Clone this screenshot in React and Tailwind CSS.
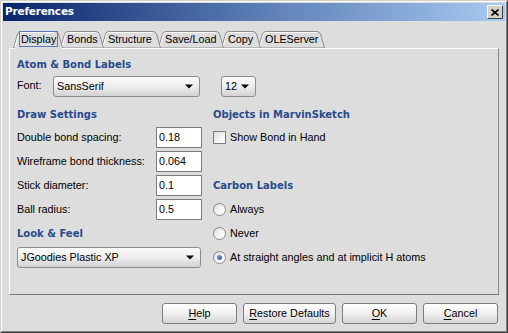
import React from 'react';

const tabs = [
  { label: 'Display', w: 'w-[50px]', z: 'z-[7]', selected: true },
  { label: 'Bonds', w: 'w-[44px]', z: 'z-[5]' },
  { label: 'Structure', w: 'w-[60px]', z: 'z-[4]' },
  { label: 'Save/Load', w: 'w-[66px]', z: 'z-[3]' },
  { label: 'Copy', w: 'w-[40px]', z: 'z-[2]' },
  { label: 'OLEServer', w: 'w-[67px]', z: 'z-[1]' },
];

function TabShape({ width }) {
  const w = width;
  return (
    <svg className="absolute inset-0" width={w} height="18" viewBox={`0 0 ${w} 18`}>
      <path d={`M0.5 18 L4.5 4 Q5.5 1.5 8 1.5 L${w - 8} 1.5 Q${w - 5.5} 1.5 ${w - 4.5} 4 L${w - 0.5} 18 Z`} fill="#dddddd" stroke="#8e8e8e" />
      <path d={`M2 17 L5.5 4.5 Q6.5 2.5 8.5 2.5 L${w - 8.5} 2.5`} fill="none" stroke="#ffffff" />
    </svg>
  );
}

function Tab({ tab }) {
  const px = parseInt(tab.w.match(/\d+/)[0], 10);
  return (
    <div className={`relative ${tab.w} ${tab.z} h-[18px] -ml-[3px] first:ml-0 flex items-center pl-[6px]`}>
      <TabShape width={px} />
      {tab.selected ? (
        <>
          <span className="relative border border-[#5b78b0] h-[16px] leading-[14px] px-[1px] -mt-[1px]">{tab.label}</span>
          <div className="absolute left-[2px] right-[1px] -bottom-[1px] h-[2px] bg-[#dddddd]" />
        </>
      ) : (
        <span className="relative pl-[1px] pt-[1px]">{tab.label}</span>
      )}
    </div>
  );
}

function Combo({ value, w }) {
  return (
    <div className={`flex items-center justify-between h-[21px] rounded-[3px] border border-[#8c8c8c] bg-gradient-to-b from-[#fafafa] via-[#eeeeee] to-[#d2d2d2] pl-[3px] pr-[6px] ${w}`}>
      <span>{value}</span>
      <svg width="8" height="5" viewBox="0 0 8 5">
        <path d="M0 0.5h8L4 4.5z" fill="#000" />
      </svg>
    </div>
  );
}

function Heading({ children }) {
  return (
    <div className="h-[16px] flex items-center font-['DejaVu_Sans',sans-serif] font-bold text-[10px] text-[#284a8c]">
      {children}
    </div>
  );
}

function Field({ label, value }) {
  return (
    <div className="h-[21px] flex items-center justify-between">
      <span>{label}</span>
      <div className="w-[46px] h-[21px] border border-[#7c7c7c] bg-white flex items-center pl-[2px]">{value}</div>
    </div>
  );
}

function Radio({ label, checked }) {
  return (
    <div className="h-[21px] flex items-center gap-[4px]">
      <div className="w-[13px] h-[13px] rounded-full border border-[#8a8a8a] bg-gradient-to-br from-[#d8d8d8] via-[#f4f4f4] to-white flex items-center justify-center">
        {checked && <div className="w-[5px] h-[5px] rounded-full bg-gradient-to-br from-[#8aa6dc] to-[#2b4f9c]" />}
      </div>
      <span>{label}</span>
    </div>
  );
}

function Button({ w, pre, u, post }) {
  return (
    <div className={`h-[21px] ${w} rounded-[3px] border border-[#7e7e7e] bg-gradient-to-b from-white via-[#f0f0f0] to-[#d4d4d4] flex items-center justify-center`}>
      <span>
        {pre}
        <span className="underline underline-offset-[2px]">{u}</span>
        {post}
      </span>
    </div>
  );
}

export default function App() {
  return (
    <div className="w-[508px] h-[333px] border border-t-[#d4d0c8] border-l-[#d4d0c8] border-r-[#404040] border-b-[#404040] bg-[#dddddd] font-['Liberation_Sans',sans-serif] text-[10.8px] text-black overflow-hidden">
      <div className="h-full border border-t-white border-l-white border-r-[#808080] border-b-[#808080] p-[1px] flex flex-col">
        {/* title bar */}
        <div className="h-[18px] flex items-center justify-between bg-gradient-to-r from-[#0a246a] via-[#5a7cb4] to-[#a6caf0] pl-[2px] pr-[2px]">
          <span className="font-['DejaVu_Sans',sans-serif] font-bold text-[10.5px] text-white tracking-[-0.2px]">Preferences</span>
          <div className="w-[16px] h-[14px] bg-[#d4d0c8] border border-t-white border-l-white border-r-[#404040] border-b-[#404040] flex items-center justify-center">
            <svg width="8" height="7" viewBox="0 0 8 7">
              <path d="M0.5 0.5L7.5 6.5M7.5 0.5L0.5 6.5" stroke="#000" strokeWidth="1.6" />
            </svg>
          </div>
        </div>

        {/* tabs */}
        <div className="mt-[9px] ml-[10px] flex relative z-[1]">
          {tabs.map((t) => (
            <Tab key={t.label} tab={t} />
          ))}
        </div>

        {/* panel */}
        <div className="mx-[6px] h-[247px] border border-t-white border-l-white border-r-[#888888] border-b-[#777777] pl-[7px] pt-[7px]">
          <Heading>Atom &amp; Bond Labels</Heading>
          <div className="mt-[4px] flex items-center">
            <span className="w-[36px] -mt-[2px]">Font:</span>
            <Combo value="SansSerif" w="w-[147px]" />
            <div className="ml-[21px]">
              <Combo value="12" w="w-[35px]" />
            </div>
          </div>

          <div className="mt-[9px] flex gap-[11px]">
            <div className="w-[185px] flex flex-col">
              <Heading>Draw Settings</Heading>
              <div className="mt-[5px] flex flex-col gap-[3px]">
                <Field label="Double bond spacing:" value="0.18" />
                <Field label="Wireframe bond thickness:" value="0.064" />
                <Field label="Stick diameter:" value="0.1" />
                <Field label="Ball radius:" value="0.5" />
                <div className="h-[21px] flex items-center">
                  <Heading>Look &amp; Feel</Heading>
                </div>
                <Combo value="JGoodies Plastic XP" w="w-[184px]" />
              </div>
            </div>

            <div className="flex-1 flex flex-col">
              <Heading>Objects in MarvinSketch</Heading>
              <div className="mt-[5px] flex flex-col gap-[3px]">
                <div className="h-[21px] flex items-center gap-[4px]">
                  <div className="w-[13px] h-[13px] border border-[#7c7c7c] bg-gradient-to-br from-[#dadada] via-[#f2f2f2] to-white" />
                  <span>Show Bond in Hand</span>
                </div>
                <div className="h-[21px]" />
                <div className="h-[21px] flex items-center">
                  <Heading>Carbon Labels</Heading>
                </div>
                <Radio label="Always" />
                <Radio label="Never" />
                <Radio label="At straight angles and at implicit H atoms" checked />
              </div>
            </div>
          </div>
        </div>

        {/* buttons */}
        <div className="mt-[8px] mr-[7px] flex justify-end gap-[6px]">
          <Button w="w-[75px]" u="H" post="elp" />
          <Button w="w-[93px]" u="R" post="estore Defaults" />
          <Button w="w-[75px]" u="O" post="K" />
          <Button w="w-[75px]" u="C" post="ancel" />
        </div>
      </div>
    </div>
  );
}
